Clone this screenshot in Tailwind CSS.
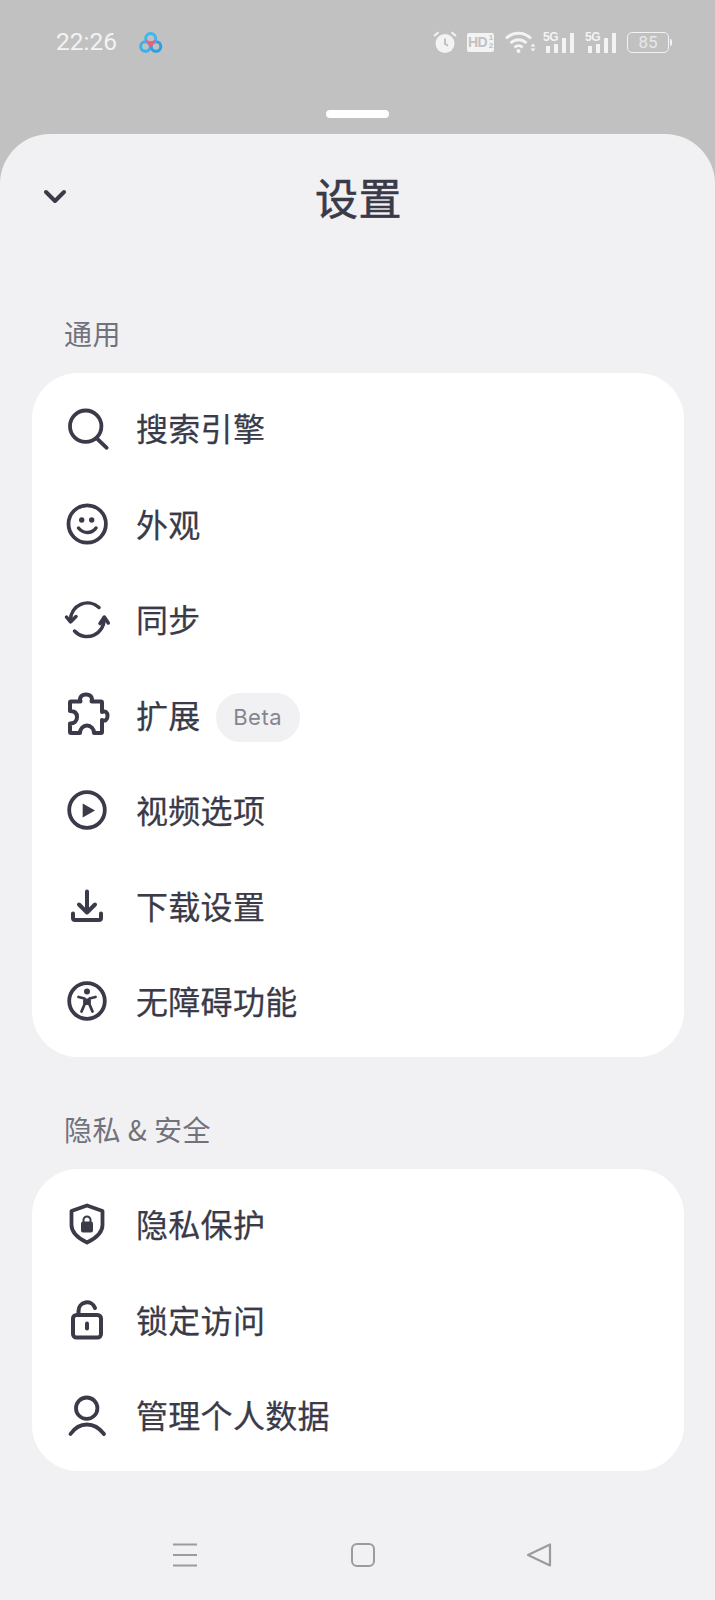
<!DOCTYPE html>
<html lang="zh-CN">
<head>
    <meta charset="UTF-8">
    <meta name="viewport" content="width=device-width, initial-scale=1.0">
    <title>设置</title>
    <script src="https://cdn.jsdelivr.net/npm/@tailwindcss/browser@4"></script>
</head>
<body class="w-[715px] h-[1600px] overflow-hidden bg-[#c1c1c1] font-['Noto_Sans_CJK_SC','Noto_Sans',sans-serif] text-[#3a3a48]">
    <!-- Status bar -->
    <div class="relative h-[134px]">
        <div class="flex items-center h-[84px] pl-[56px] pr-[43px] text-[#f3f3f3]">
            <span class="font-['Roboto',sans-serif] text-[24.5px] w-[83px]">22:26</span>
            <svg class="w-[26px] h-[26px]" viewBox="0 0 26 26" fill="none" stroke-width="3">
                <circle cx="6.500" cy="17.500" r="4.800" stroke="#35b4ec"/>
                <circle cx="17" cy="17.500" r="4.800" stroke="#2c9fe4"/>
                <circle cx="11.700" cy="9.500" r="5" stroke="#3cb8f0"/>
                <path d="M7.500 11.500c1 2 2.500 4 4.200 5.500 1.700-1.500 3.200-3.500 4.200-5.500-1.500 2-6.900 2-8.400 0z" fill="#ef5d7e" stroke="#ef5d7e" stroke-width="1.500" stroke-linejoin="round"/>
            </svg>
            <div class="flex items-center ml-auto">
                <!-- alarm -->
                <svg class="w-[24px] h-[22px]" viewBox="0 0 24 22" fill="#f3f3f3">
                    <circle cx="12" cy="12.500" r="9.500"/>
                    <path d="M12 7.500v5.500l3 1.600" fill="none" stroke="#c1c1c1" stroke-width="2"/>
                    <path d="M1 5 5.500 1.200M23 5 18.500 1.200" fill="none" stroke="#f3f3f3" stroke-width="2"/>
                </svg>
                <!-- HD badge -->
                <div class="ml-[10px] w-[27px] h-[19px] bg-[#f3f3f3] rounded-[2px] flex items-center pl-[1px] text-[#c1c1c1] font-['Liberation_Sans',sans-serif] font-bold text-[14px] leading-none tracking-[-0.5px]">HD<span class="text-[8px] leading-[8px] w-[7px] text-center">1<br>2</span></div>
                <!-- wifi -->
                <svg class="ml-[11px] w-[31px] h-[22px]" viewBox="0 0 31 22" fill="none" stroke="#f3f3f3" stroke-width="3">
                    <path d="M1 7.500c7-7 18-7 25 0"/>
                    <path d="M5.500 12c4.500-4.500 11.500-4.500 16 0"/>
                    <path d="M9.500 16.500c2.500-2.500 5.500-2.500 8 0"/>
                    <circle cx="13.500" cy="20" r="2" fill="#f3f3f3" stroke="none"/>
                    <path d="M25.500 15.500h5l-2.500-3zM25.500 17.500h5l-2.500 3z" fill="#f3f3f3" stroke="none"/>
                </svg>
                <!-- signal 1 -->
                <div class="relative ml-[7px] w-[31px] h-[22px] flex items-end gap-[4px] pl-[3px]">
                    <span class="absolute left-0 top-0 font-['Liberation_Sans',sans-serif] font-bold text-[12px] leading-[12px] tracking-[-0.5px] text-[#f3f3f3]">5G</span>
                    <i class="block w-[4px] h-[7px] bg-[#f3f3f3]"></i>
                    <i class="block w-[4px] h-[9px] bg-[#f3f3f3]"></i>
                    <i class="block w-[4px] h-[15px] bg-[#f3f3f3]"></i>
                    <i class="block w-[4px] h-[20px] bg-[#f3f3f3]"></i>
                </div>
                <!-- signal 2 -->
                <div class="relative ml-[11px] w-[31px] h-[22px] flex items-end gap-[4px] pl-[3px]">
                    <span class="absolute left-0 top-0 font-['Liberation_Sans',sans-serif] font-bold text-[12px] leading-[12px] tracking-[-0.5px] text-[#f3f3f3]">5G</span>
                    <i class="block w-[4px] h-[7px] bg-[#f3f3f3]"></i>
                    <i class="block w-[4px] h-[9px] bg-[#f3f3f3]"></i>
                    <i class="block w-[4px] h-[15px] bg-[#f3f3f3]"></i>
                    <i class="block w-[4px] h-[20px] bg-[#f3f3f3]"></i>
                </div>
                <!-- battery -->
                <div class="ml-[11px] w-[42px] h-[21px] border border-[#f3f3f3] rounded-[5px] flex items-center justify-center font-['Roboto',sans-serif] text-[17px] leading-none text-[#e8e8e8]">85</div>
                <div class="ml-[1px] w-[2px] h-[7px] bg-[#f3f3f3] rounded-r-sm"></div>
            </div>
        </div>
        <div class="absolute left-[326px] top-[110px] w-[63px] h-[8px] rounded-full bg-white"></div>
    </div>

    <!-- Sheet -->
    <div class="h-[1466px] bg-[#f1f1f3] rounded-t-[50px] flex flex-col">
        <header class="h-[128px] grid grid-cols-[1fr_auto_1fr] items-center pl-[42px]">
            <svg class="w-[26px] h-[16px] -translate-y-[1px]" viewBox="0 0 26 16" fill="none" stroke="#3a3a48" stroke-width="4" stroke-linecap="round" stroke-linejoin="round">
                <path d="M4 3l9 9 9-9"/>
            </svg>
            <h1 class="text-[43px] leading-none tracking-[0.5px] -translate-x-[20px] -translate-y-[2px] [-webkit-text-stroke:0.6px]">设置</h1>
        </header>

        <h2 class="mt-[51px] mb-[20px] pl-[64px] text-[28px] leading-[40px] tracking-[0.5px] text-[#72727c]">通用</h2>
        <section class="mx-[31.5px] py-[7.5px] bg-white rounded-[46px]">
            <div class="flex items-center h-[95.5px] pl-[31.5px] gap-[25px]">
                <svg class="w-12 h-12" viewBox="0 0 48 48" fill="none" stroke="#3a3a48" stroke-width="3.800" stroke-linecap="round"><circle cx="22.700" cy="22.200" r="15.700"/><path d="M34.300 34.800l9.400 9"/></svg>
                <span class="text-[32px] leading-none tracking-[0.3px] -translate-y-[1px] [-webkit-text-stroke:0.25px]">搜索引擎</span>
            </div>
            <div class="flex items-center h-[95.5px] pl-[31.5px] gap-[25px]">
                <svg class="w-12 h-12" viewBox="0 0 48 48" fill="none" stroke="#3a3a48" stroke-width="3.800" stroke-linecap="round"><circle cx="24.200" cy="24" r="18.700"/><circle cx="18.700" cy="20" r="2.700" fill="#3a3a48" stroke="none"/><circle cx="28.700" cy="20" r="2.700" fill="#3a3a48" stroke="none"/><path d="M15.500 28c5 6 13 6 17.500 0" stroke-width="3.500"/></svg>
                <span class="text-[32px] leading-none tracking-[0.3px] -translate-y-[1px] [-webkit-text-stroke:0.25px]">外观</span>
            </div>
            <div class="flex items-center h-[95.5px] pl-[31.5px] gap-[25px]">
                <svg class="w-12 h-12" viewBox="0 0 48 48" fill="none" stroke="#3a3a48" stroke-width="3.500" stroke-linecap="round" stroke-linejoin="round"><path d="M7.500 25A17 17 0 0 1 36 12.500"/><path d="M41 23A17 17 0 0 1 11.500 36"/><path d="M3.500 22l4 5 5.500-5.500"/><path d="M37 28.500l4.300-6.500 4 6"/></svg>
                <span class="text-[32px] leading-none tracking-[0.3px] -translate-y-[1px] [-webkit-text-stroke:0.25px]">同步</span>
            </div>
            <div class="flex items-center h-[95.5px] pl-[31.5px]">
                <svg class="w-12 h-12 mr-[25px]" viewBox="0 0 48 48" fill="none" stroke="#3a3a48" stroke-width="4" stroke-linejoin="round"><path d="M8 10.500h9.500c-1.500-4 1-7 5.500-7s7 3 5.500 7H38a1 1 0 0 1 1 1V21c3-1.500 5.500 0 5.500 4s-2.500 5.500-5.500 4v12a1 1 0 0 1-1 1h-7c0-4-3-7.500-7-7.500s-7 3.500-7 7.500H8a1 1 0 0 1-1-1v-8.500c4.500 0 7-2.500 7-6.500s-2.500-6-7-6v-8.500a1 1 0 0 1 1-1z"/></svg>
                <span class="text-[32px] leading-none tracking-[0.3px] -translate-y-[1px] [-webkit-text-stroke:0.25px]">扩展</span>
                <span class="ml-[15px] mt-[5px] w-[84px] h-[49px] rounded-full bg-[#f1f1f3] flex items-center justify-center font-['Inter',sans-serif] text-[22px] tracking-[0.5px] text-[#85858f]">Beta</span>
            </div>
            <div class="flex items-center h-[95.5px] pl-[31.5px] gap-[25px]">
                <svg class="w-12 h-12" viewBox="0 0 48 48" fill="none" stroke="#3a3a48" stroke-width="3.800" stroke-linejoin="round"><circle cx="24" cy="24" r="17.800"/><path d="M19.700 17.500 32 24.500 19.700 31.500z" fill="#3a3a48" stroke="none"/></svg>
                <span class="text-[32px] leading-none tracking-[0.3px] -translate-y-[1px] [-webkit-text-stroke:0.25px]">视频选项</span>
            </div>
            <div class="flex items-center h-[95.5px] pl-[31.5px] gap-[25px]">
                <svg class="w-12 h-12" viewBox="0 0 48 48" fill="none" stroke="#3a3a48" stroke-width="4" stroke-linecap="round" stroke-linejoin="round"><path d="M24 9.500V30M16 22.500l8 8 8-8"/><path d="M10 31.500V36a2 2 0 0 0 2 2h24a2 2 0 0 0 2-2v-4.500"/></svg>
                <span class="text-[32px] leading-none tracking-[0.3px] -translate-y-[1px] [-webkit-text-stroke:0.25px]">下载设置</span>
            </div>
            <div class="flex items-center h-[95.5px] pl-[31.5px] gap-[25px]">
                <svg class="w-12 h-12" viewBox="0 0 48 48" fill="none" stroke="#3a3a48" stroke-width="3.800" stroke-linecap="round" stroke-linejoin="round"><circle cx="24" cy="24" r="17.800"/><circle cx="24" cy="14.500" r="3" fill="#3a3a48" stroke="none"/><path d="M15.500 20l6 1.500v6L18.500 34.500M32.500 20l-6 1.500v6L29.500 34.500" stroke-width="2.800"/><path d="M22 21.500h4v6.500h-4z" fill="#3a3a48" stroke="none"/></svg>
                <span class="text-[32px] leading-none tracking-[0.3px] -translate-y-[1px] [-webkit-text-stroke:0.25px]">无障碍功能</span>
            </div>
        </section>

        <h2 class="mt-[52px] mb-[20px] pl-[64px] text-[28px] leading-[40px] tracking-[0.5px] text-[#72727c]">隐私 &amp; 安全</h2>
        <section class="mx-[31.5px] py-[8px] bg-white rounded-[46px]">
            <div class="flex items-center h-[95.5px] pl-[31.5px] gap-[25px]">
                <svg class="w-12 h-12" viewBox="0 0 48 48" fill="none" stroke="#3a3a48" stroke-width="3.800" stroke-linejoin="round"><path d="M24 5.500 39.500 11V25c0 8-6 13-15.500 17.500C14.500 38 8.500 33 8.500 25V11z"/><rect x="18" y="21.500" width="12" height="11" rx="2" fill="#3a3a48" stroke="none"/><path d="M20.500 22v-2a3.500 3.500 0 0 1 7 0v2" stroke-width="2"/></svg>
                <span class="text-[32px] leading-none tracking-[0.3px] -translate-y-[1px] [-webkit-text-stroke:0.25px]">隐私保护</span>
            </div>
            <div class="flex items-center h-[95.5px] pl-[31.5px] gap-[25px]">
                <svg class="w-12 h-12" viewBox="0 0 48 48" fill="none" stroke="#3a3a48" stroke-width="4" stroke-linecap="round" stroke-linejoin="round"><rect x="10" y="19" width="28" height="22.500" rx="3.500"/><path d="M15.500 18.500V15a8.500 8.500 0 0 1 16.500-3"/><path d="M24 27.500v5"/></svg>
                <span class="text-[32px] leading-none tracking-[0.3px] -translate-y-[1px] [-webkit-text-stroke:0.25px]">锁定访问</span>
            </div>
            <div class="flex items-center h-[95.5px] pl-[31.5px] gap-[25px]">
                <svg class="w-12 h-12" viewBox="0 0 48 48" fill="none" stroke="#3a3a48" stroke-width="3.800" stroke-linecap="round"><circle cx="23.700" cy="17.200" r="10.700"/><path d="M7.500 43C12 36.500 17 33.500 24 33.500S36 36.500 41 43"/></svg>
                <span class="text-[32px] leading-none tracking-[0.3px] -translate-y-[1px] [-webkit-text-stroke:0.25px]">管理个人数据</span>
            </div>
        </section>

        <!-- Nav bar -->
        <nav class="mt-[57px] relative h-[60px]">
            <svg class="absolute left-[172px] top-[15px] w-[26px] h-[24px]" viewBox="0 0 26 24" fill="none" stroke="#9b9b9b" stroke-width="2.200"><path d="M1 1.500h24M1 12h24M1 22.500h24"/></svg>
            <div class="absolute left-[350.5px] top-[15px] w-[24px] h-[24px] border-[2px] border-[#9b9b9b] rounded-[6px]"></div>
            <svg class="absolute left-[526px] top-[15px] w-[26px] h-[24px]" viewBox="0 0 26 24" fill="none" stroke="#9b9b9b" stroke-width="2.200" stroke-linejoin="round"><path d="M2 12 24 1.500v21z"/></svg>
        </nav>
    </div>
</body>
</html>
